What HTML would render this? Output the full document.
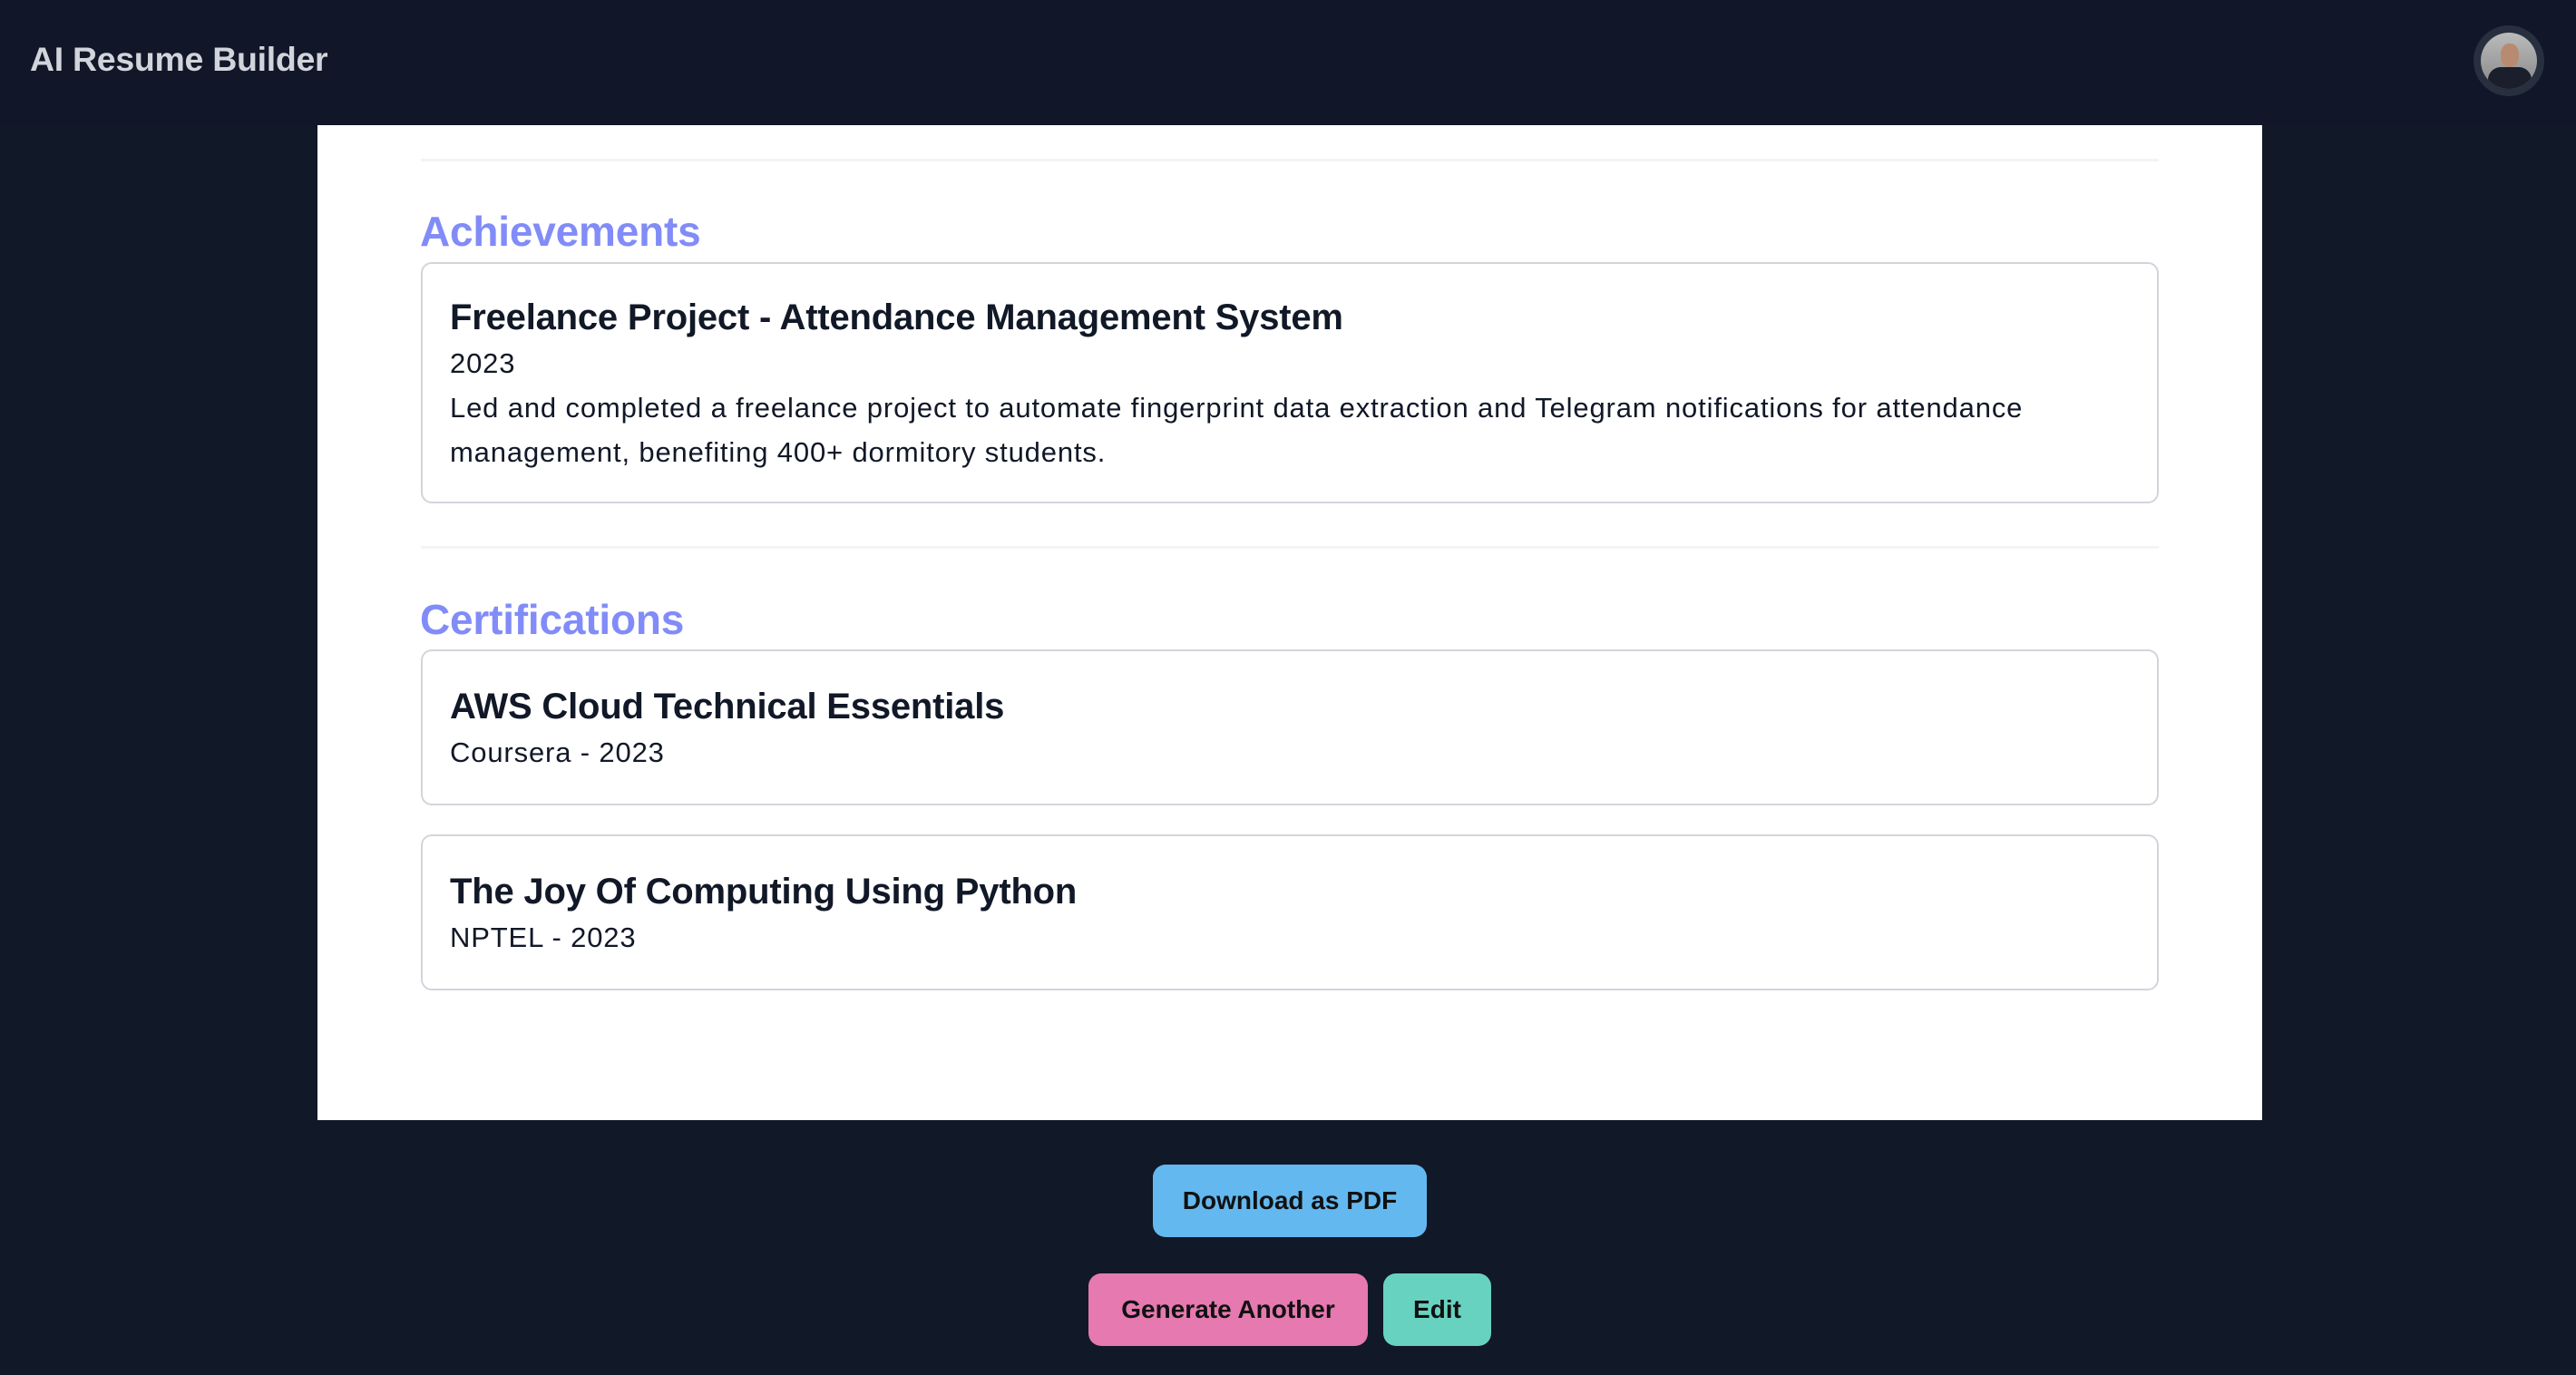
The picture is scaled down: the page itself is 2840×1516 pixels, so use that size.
<!DOCTYPE html>
<html><head><meta charset="utf-8"><style>
*{margin:0;padding:0;box-sizing:border-box}
body{width:2840px;height:1516px;background:#111827;font-family:"Liberation Sans",sans-serif;position:relative;overflow:hidden}
.hdr{position:absolute;left:0;top:0;width:2840px;height:138px;background:#111729}
.logo{position:absolute;left:33px;top:44px;font-size:37.5px;font-weight:bold;color:#d1d5db;letter-spacing:-0.3px}
.av{position:absolute;left:2727px;top:28px;width:78px;height:78px;border-radius:50%;background:#283040;overflow:hidden}
.av .in{position:absolute;left:8px;top:8px;width:62px;height:62px;border-radius:50%;background:linear-gradient(#bbb,#888);overflow:hidden}
.paper{position:absolute;left:350px;top:138px;width:2144px;height:1097px;background:#fff}
.hr{position:absolute;left:464px;width:1916px;height:3px;background:#f3f4f6}
.h2{position:absolute;left:463px;font-size:46px;font-weight:bold;color:#818cf8;letter-spacing:-0.2px}
.card{position:absolute;left:464px;width:1916px;border:2px solid #d1d5db;border-radius:12px;background:#fff}
.t{position:absolute;left:496px;font-size:40px;font-weight:bold;color:#111827;letter-spacing:-0.2px}
.s{position:absolute;left:496px;font-size:31px;color:#111827;letter-spacing:0.85px}
.btn{position:absolute;border-radius:14px;font-size:28px;font-weight:bold;color:#111;display:flex;align-items:center;justify-content:center}
</style></head><body>
<div class="hdr"><div class="logo">AI Resume Builder</div>
<div class="av"><div class="in"><div style="position:absolute;left:22px;top:12px;width:20px;height:26px;border-radius:45%;background:#b88a70"></div><div style="position:absolute;left:8px;top:38px;width:48px;height:30px;border-radius:14px 14px 0 0;background:#1a1f2b"></div></div></div></div>
<div class="paper"></div>
<div class="hr" style="top:175px"></div>
<div class="h2" style="top:228px">Achievements</div>
<div class="card" style="top:289px;height:266px"></div>
<div class="t" style="top:328px">Freelance Project - Attendance Management System</div>
<div class="s" style="top:383px">2023</div>
<div class="s" style="top:425px;line-height:49px;width:1790px">Led and completed a freelance project to automate fingerprint data extraction and Telegram notifications for attendance management, benefiting 400+ dormitory students.</div>
<div class="hr" style="top:602px"></div>
<div class="h2" style="top:656px">Certifications</div>
<div class="card" style="top:716px;height:172px"></div>
<div class="t" style="top:757px">AWS Cloud Technical Essentials</div>
<div class="s" style="top:812px">Coursera - 2023</div>
<div class="card" style="top:920px;height:172px"></div>
<div class="t" style="top:961px">The Joy Of Computing Using Python</div>
<div class="s" style="top:1016px">NPTEL - 2023</div>
<div class="btn" style="left:1271px;top:1284px;width:302px;height:80px;background:#63b8f0">Download as PDF</div>
<div class="btn" style="left:1200px;top:1404px;width:308px;height:80px;background:#e579b0">Generate Another</div>
<div class="btn" style="left:1525px;top:1404px;width:119px;height:80px;background:#68d2c0">Edit</div>
</body></html>
